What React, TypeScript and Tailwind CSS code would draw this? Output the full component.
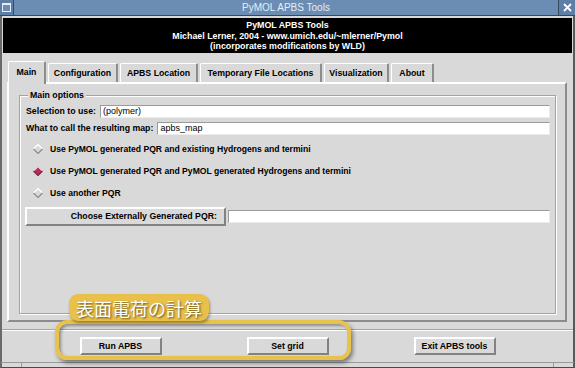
import React from "react";

const F = "font-['Liberation_Sans',Arial,Helvetica,sans-serif]";

function Radio({ on }: { on?: boolean }) {
  return (
    <svg width="10" height="10" viewBox="0 0 10 10" className="shrink-0">
      <polygon points="5,0.5 9.5,5 5,9.5 0.5,5" fill={on ? "#b03060" : "#d9d9d9"} />
      <polyline points="0.5,5 5,0.5 9.5,5" fill="none" stroke={on ? "#f0d0dc" : "#ffffff"} strokeWidth="1.2" />
      <polyline points="0.5,5 5,9.5 9.5,5" fill="none" stroke={on ? "#7a2040" : "#8c8c8c"} strokeWidth="1.2" />
    </svg>
  );
}

function Entry({ value, className = "" }: { value?: string; className?: string }) {
  return (
    <div
      className={`h-[13px] bg-white border-t border-l border-[#9a9a9a] border-b border-r border-b-[#ececec] border-r-[#ececec] flex items-center pl-[2px] text-[9px] text-black leading-none ${className}`}
    >
      {value}
    </div>
  );
}

function Btn({ label, className = "" }: { label: string; className?: string }) {
  return (
    <div
      className={`h-[18px] bg-[#d9d9d9] border-2 border-t-white border-l-white border-r-[#828282] border-b-[#828282] flex items-center text-[8.75px] font-bold text-black leading-none ${className}`}
    >
      {label}
    </div>
  );
}

function Tab({ label, w, sel }: { label: string; w: string; sel?: boolean }) {
  return (
    <div
      className={`${w} ${
        sel ? "h-[23px] -mb-[2px] z-10 pb-[2px]" : "h-[19px]"
      } relative bg-[#d9d9d9] border-t border-l border-white border-r-2 border-r-[#8c8c8c] rounded-t-[2px] flex items-center justify-center text-[8.75px] font-bold text-black leading-none`}
    >
      {label}
    </div>
  );
}

export default function App() {
  return (
    <div className={`relative w-[575px] h-[368px] bg-[#d9d9d9] overflow-hidden flex flex-col ${F}`}>
      {/* title bar */}
      <div className="h-[16px] flex bg-[#6b8db4] border-b border-[#34485f] shrink-0">
        <div className="w-[14px] h-[15px] bg-[#5d7fa6] border-r border-[#34485f] flex items-center justify-center">
          <div className="w-[9px] h-[9px] border border-[#e8eef5] bg-[#6b8db4] border-t-2"></div>
        </div>
        <div className="flex-1 flex items-center justify-center text-[10px] text-[#e6edf5] leading-none">
          PyMOL APBS Tools
        </div>
        <div className="w-[17px] h-[15px] bg-[#5d7fa6] border-l border-[#34485f] flex items-center justify-center">
          <svg width="9" height="9" viewBox="0 0 9 9">
            <path d="M1 1 L8 8 M8 1 L1 8" stroke="#ffffff" strokeWidth="1.8" />
          </svg>
        </div>
      </div>

      {/* body with window frame */}
      <div className="flex-1 flex flex-col border-x-2 border-l-[#6a6a6a] border-r-[#5a5a5a]">
        {/* black header */}
        <div className="mt-[2px] mx-[1px] h-[35px] bg-black flex flex-col items-center justify-center text-white text-[8.85px] font-bold leading-[10.5px] pt-[1px]">
          <div>PyMOL APBS Tools</div>
          <div>Michael Lerner, 2004 - www.umich.edu/~mlerner/Pymol</div>
          <div>(incorporates modifications by WLD)</div>
        </div>

        {/* tabs */}
        <div className="mt-[7px] pl-[6px] h-[22px] flex items-end gap-[2px]">
          <Tab label="Main" w="w-[38px]" sel />
          <Tab label="Configuration" w="w-[70px]" />
          <Tab label="APBS Location" w="w-[78px]" />
          <Tab label="Temporary File Locations" w="w-[122px]" />
          <Tab label="Visualization" w="w-[65px]" />
          <Tab label="About" w="w-[43px]" />
        </div>

        {/* notebook pane */}
        <div className="ml-[5px] mr-[6px] h-[240px] border-2 border-t-white border-l-white border-r-[#8c8c8c] border-b-[#8c8c8c] pt-[11px] pl-[10px] pr-[9px] pb-[6px] flex flex-col">
          <div className="relative flex-1 border border-[#a3a3a3] shadow-[inset_1px_1px_0_#ffffff,1px_1px_0_#ffffff] pt-[9px] pl-[6px] pr-[5px] flex flex-col">
            <div className="absolute -top-[6px] left-[8px] px-[2px] bg-[#d9d9d9] text-[8.75px] font-bold leading-[11px] text-black">
              Main options
            </div>
            <div className="h-[13px] flex items-center">
              <span className="text-[8.75px] font-bold text-black leading-none whitespace-nowrap">Selection to use:</span>
              <Entry value="(polymer)" className="flex-1 ml-[4px]" />
            </div>
            <div className="mt-[4px] h-[13px] flex items-center">
              <span className="text-[8.75px] font-bold text-black leading-none whitespace-nowrap">What to call the resulting map:</span>
              <Entry value="apbs_map" className="flex-1 ml-[4px]" />
            </div>
            <div className="mt-[3px] flex flex-col">
              {[
                ["Use PyMOL generated PQR and existing Hydrogens and termini", false],
                ["Use PyMOL generated PQR and PyMOL generated Hydrogens and termini", true],
                ["Use another PQR", false],
              ].map(([t, on], i) => (
                <div key={i} className="h-[22px] flex items-center pl-[7px] gap-[7px]">
                  <Radio on={on as boolean} />
                  <span className="text-[8.6px] font-bold text-black leading-none whitespace-nowrap">{t as string}</span>
                </div>
              ))}
            </div>
            <div className="mt-[3px] -ml-[1px] flex items-center gap-[2px]">
              <Btn label="Choose Externally Generated PQR:" className="w-[201px] h-[19px] justify-end pr-[7px]" />
              <Entry className="flex-1" />
            </div>
          </div>
        </div>

        {/* separator */}
        <div className="mt-[7px] border-t border-[#a3a3a3] shadow-[0_1px_0_#ffffff]"></div>

        {/* bottom buttons */}
        <div className="mt-[7px] flex justify-center gap-[85px]">
          <Btn label="Run APBS" className="w-[82px] justify-center" />
          <Btn label="Set grid" className="w-[82px] justify-center" />
          <Btn label="Exit APBS tools" className="w-[82px] justify-center" />
        </div>
        <div className="flex-1"></div>
      </div>

      {/* bottom window frame */}
      <div className="h-[6px] shrink-0 border-t border-[#9a9a9a] border-b border-b-[#4a4a4a] border-x-2 border-l-[#6a6a6a] border-r-[#5a5a5a] bg-[#d9d9d9] flex justify-between px-[19px]">
        <div className="w-px bg-[#9a9a9a]"></div>
        <div className="w-px bg-[#9a9a9a]"></div>
      </div>

      {/* annotation overlay */}
      <div className="absolute left-[55px] top-[320px] w-[296px] h-[40px] rounded-[12px] border-[4px] border-[#e8c24a] shadow-[2px_3px_4px_rgba(0,0,0,0.45),inset_2px_2px_3px_rgba(0,0,0,0.35)]"></div>
      <div className="absolute left-[69px] top-[294px] w-[140px] h-[27px] rounded-[9px] bg-[#e9c04a] shadow-[1px_2px_3px_rgba(0,0,0,0.35)] flex items-center justify-center">
        <span className="text-white text-[18px] leading-none font-['Noto_Sans_CJK_JP','Noto_Sans_CJK_SC',sans-serif] [text-shadow:1px_1px_2px_rgba(60,50,20,0.8)]">
          表面電荷の計算
        </span>
      </div>
    </div>
  );
}
